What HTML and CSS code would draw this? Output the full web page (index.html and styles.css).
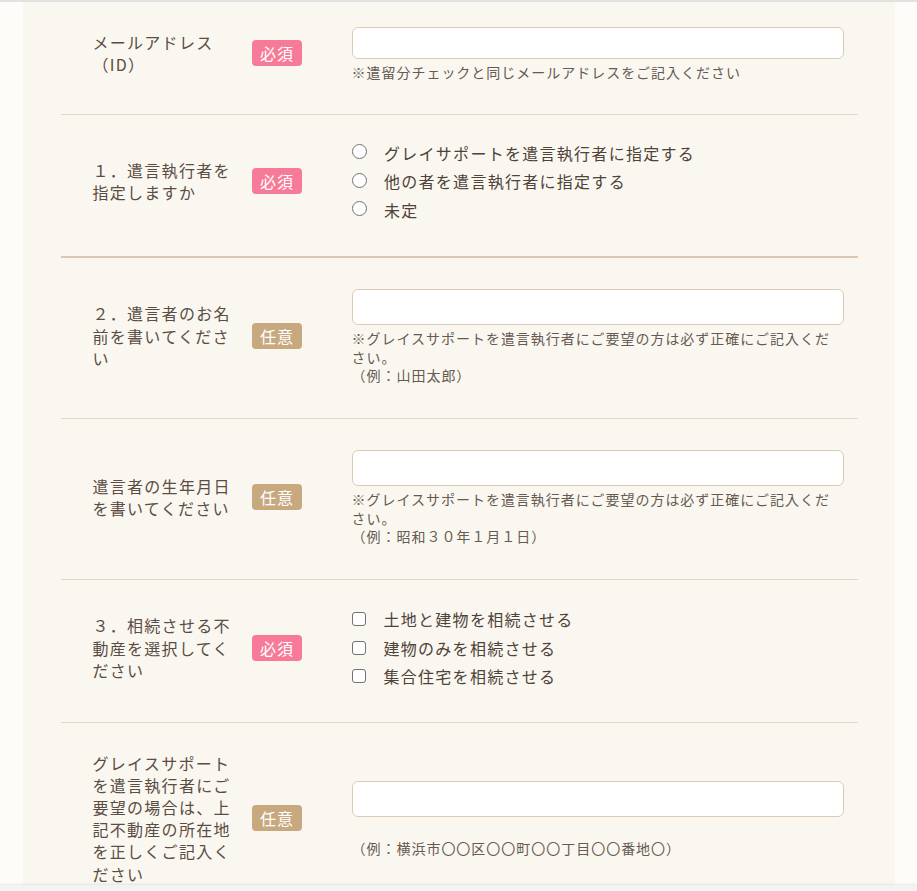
FILE: index.html
```html
<!DOCTYPE html>
<html lang="ja">
<head>
<meta charset="utf-8">
<title>フォーム</title>
<link rel="stylesheet" href="styles.css">
</head>
<body>
<div class="page">
  <form class="panel">
    <div class="row row--first">
      <div class="label">メールアドレス<br>（ID）</div>
      <span class="badge badge--req">必須</span>
      <div class="field">
        <input class="text text--email" type="email">
        <p class="note">※遣留分チェックと同じメールアドレスをご記入ください</p>
      </div>
    </div>

    <div class="row row--choice row--section">
      <div class="label">１．遣言執行者を指定しますか</div>
      <span class="badge badge--req">必須</span>
      <div class="field">
        <ul class="choices">
          <li class="choice"><span class="radio"></span><span>グレイサポートを遣言執行者に指定する</span></li>
          <li class="choice"><span class="radio"></span><span>他の者を遣言執行者に指定する</span></li>
          <li class="choice"><span class="radio"></span><span>未定</span></li>
        </ul>
      </div>
    </div>

    <div class="row">
      <div class="label">２．遣言者のお名前を書いてください</div>
      <span class="badge badge--opt">任意</span>
      <div class="field">
        <input class="text" type="text">
        <p class="note">※グレイスサポートを遣言執行者にご要望の方は必ず正確にご記入ください。<br>（例：山田太郎）</p>
      </div>
    </div>

    <div class="row">
      <div class="label">遣言者の生年月日を書いてください</div>
      <span class="badge badge--opt">任意</span>
      <div class="field">
        <input class="text" type="text">
        <p class="note">※グレイスサポートを遣言執行者にご要望の方は必ず正確にご記入ください。<br>（例：昭和３０年１月１日）</p>
      </div>
    </div>

    <div class="row row--choice">
      <div class="label">３．相続させる不動産を選択してください</div>
      <span class="badge badge--req">必須</span>
      <div class="field">
        <ul class="choices">
          <li class="choice"><span class="check"></span><span>土地と建物を相続させる</span></li>
          <li class="choice"><span class="check"></span><span>建物のみを相続させる</span></li>
          <li class="choice"><span class="check"></span><span>集合住宅を相続させる</span></li>
        </ul>
      </div>
    </div>

    <div class="row">
      <div class="label">グレイスサポートを遣言執行者にご要望の場合は、上記不動産の所在地を正しくご記入ください</div>
      <span class="badge badge--opt">任意</span>
      <div class="field">
        <input class="text" type="text">
        <p class="note"><br>（例：横浜市〇〇区〇〇町〇〇丁目〇〇番地〇）</p>
      </div>
    </div>
  </form>
</div>
<div class="bottom-bar"></div>
</body>
</html>
```
FILE: styles.css
```css
html, body {
  height: 100%;
  overflow: hidden;
}

body {
  margin: 0;
  background: #fdfcf9;
  font-family: "Noto Sans CJK JP", "Noto Sans", sans-serif;
  color: #5a4d43;
  letter-spacing: 0.08em;
}

.page {
  border-top: 2px solid #e2e2e2;
}

.panel {
  width: 872px;
  margin: 0 auto;
  background: #faf7f1;
  padding: 0 37px 0 38px;
  box-sizing: border-box;
}

.row {
  display: flex;
  align-items: center;
  padding: 29px 14px 33.5px 32px;
  border-bottom: 1px solid #e6d7c4;
}

.row--first {
  padding-top: 23px;
  padding-bottom: 32px;
}

.row--choice {
  padding-top: 25px;
  padding-bottom: 31px;
}

.row--section {
  padding-top: 24px;
  padding-bottom: 32px;
  border-bottom: 2px solid #d9c8af;
}

.label {
  width: 145px;
  margin-right: 14px;
  flex: none;
  font-size: 16px;
  line-height: 22.2px;
  color: #5a4d43;
}

.badge {
  flex: none;
  width: 50px;
  height: 26px;
  border-radius: 4px;
  color: #fff;
  font-size: 16px;
  line-height: 26px;
  text-align: center;
  letter-spacing: 0.05em;
  text-indent: 0.05em;
  margin-right: 50px;
}

.badge--req {
  background: #f77b99;
}

.badge--opt {
  background: #c7a87f;
}

.field {
  width: 492px;
  flex: none;
}

.text {
  display: block;
  box-sizing: border-box;
  width: 492px;
  height: 36px;
  margin: 2px 0 0;
  border: 1px solid #dccbb4;
  border-radius: 6px;
  background: #fff;
  padding: 0 10px;
  font: inherit;
}

.text--email {
  height: 32px;
}

.note {
  margin: 4px 0 0;
  font-size: 14px;
  line-height: 18.5px;
  letter-spacing: 0.07em;
  color: #675a50;
}

.choices {
  list-style: none;
  margin: 0;
  padding: 0;
}

.choice {
  display: flex;
  align-items: center;
  height: 28.5px;
  font-size: 16px;
  color: #4f4238;
}

.radio,
.check {
  display: block;
  flex: none;
  box-sizing: border-box;
  width: 15px;
  height: 15px;
  margin: 0 17px 0 0.5px;
  border: 1.5px solid #727272;
  background: #fff;
}

.radio {
  border-radius: 50%;
  position: relative;
  top: -1px;
}

.check {
  width: 14px;
  height: 14px;
  border-radius: 3px;
  margin-right: 17.5px;
}

.bottom-bar {
  position: fixed;
  left: 0;
  right: 0;
  bottom: 0;
  height: 6px;
  background: #f3f3f3;
  box-shadow: 0 -1px 2px rgba(0, 0, 0, 0.08);
}
```
